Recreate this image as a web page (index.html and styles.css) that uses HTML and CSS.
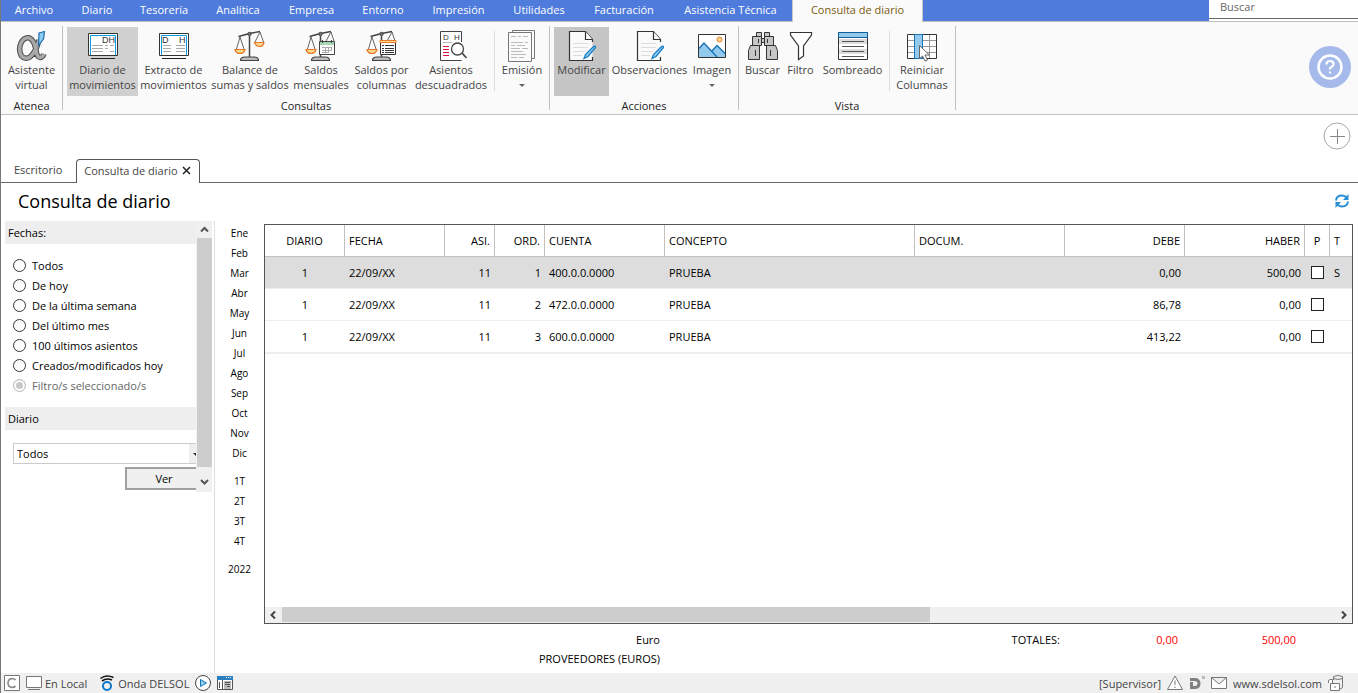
FILE: index.html
```html
<!DOCTYPE html>
<html lang="es">
<head>
<meta charset="utf-8">
<title>Consulta de diario</title>
<link rel="stylesheet" href="styles.css">
</head>
<body>
<svg class="defs" aria-hidden="true">
  <defs>
    <g id="scale-base" fill="none" stroke="#444">
      <path d="M4.500 6.500L15.500 3.500L26 1.500" stroke-width="1.300"/>
      <circle cx="15.500" cy="4" r="1.700" fill="#777"/>
      <path d="M15.500 6V27" stroke-width="1.500"/>
      <path d="M6 7L2.500 19M6 7L10 19" stroke="#666"/>
      <path d="M1 19.500H11Q10 23.500 6 23.500T1 19.500Z" fill="#fbd98c" stroke="#e8792b" stroke-width="1.200"/>
      <path d="M6.500 30.500Q6.500 27 11 27H20Q24.500 27 24.500 30.500Z" fill="#bbb" stroke-width="1.200"/>
    </g>
    <g id="page-pen" fill="none">
      <path d="M26.500 12V9.500L19.500 1.500H3.500V30.500H26.500V27" fill="#fafafa" stroke="#333" stroke-width="1.200"/>
      <path d="M19.500 1.500V9.500H26.500" fill="#fafafa" stroke="#333" stroke-width="1.200"/>
      <path d="M7 13.500H22M7 17.500H22M7 21.500H19M7 25.500H16" stroke="#ddd"/>
      <path d="M18 28.500L19.500 24.500L27 17Q29.500 15 29.500 17.500L22 26.500Z" fill="#8ecbf0" stroke="#1b7fc4" stroke-width="1.300"/>
    </g>
  </defs>
</svg>
<div class="app">
  <header class="menubar">
    <nav class="menu">
      <button>Archivo</button><button>Diario</button><button>Tesorería</button><button>Analítica</button><button>Empresa</button><button>Entorno</button><button>Impresión</button><button>Utilidades</button><button>Facturación</button><button>Asistencia Técnica</button><button class="current">Consulta de diario</button>
    </nav>
    <input class="search" type="text" placeholder="Buscar" aria-label="Buscar">
  </header>

  <section class="ribbon">
    <div class="group">
      <div class="tools atenea">
        <button class="tool"><svg viewBox="0 0 32 32"><path d="M23 10Q20 22 14 27Q9 30 5.500 26Q2 20 5 13Q8 7 13.500 8Q18 10 20 20Q21 28 24.500 27.500Q27 27 28 24" fill="none" stroke="#4b4b4b" stroke-width="5.500"/><path d="M23 10Q20 22 14 27Q9 30 5.500 26Q2 20 5 13Q8 7 13.500 8Q18 10 20 20Q21 28 24.500 27.500Q27 27 28 24" fill="none" stroke="#a9a9a9" stroke-width="3.500"/><path d="M23 3L28.500 1.500L27.500 9L22.500 15.500Z" fill="#8ecbf0" stroke="#1b6fae" stroke-width="1.200"/></svg><span>Asistente<br>virtual</span></button>
      </div>
      <div class="group-name">Atenea</div>
    </div>
    <div class="group">
      <div class="tools consultas">
        <button class="tool selected"><svg viewBox="0 0 32 32"><path d="M1.500 3.500H30.500V25.500H1.500Z" fill="#fff" stroke="#333"/><path d="M3.500 25V5.500H28.500V25" fill="none" stroke="#0b9be3"/><text x="15" y="13" class="glyph">DH</text><path d="M5 15.500H16M18 15.500H21M23 15.500H27M5 18.500H16M18 18.500H21M5 21.500H16M23 21.500H27" stroke="#aaa"/><path d="M4 28.500H28" stroke="#222"/></svg><span>Diario de<br>movimientos</span></button>
        <button class="tool"><svg viewBox="0 0 32 32"><path d="M1.500 3.500H30.500V25.500H1.500Z" fill="#fff" stroke="#333"/><path d="M3.500 25V5.500H28.500V25" fill="none" stroke="#0b9be3"/><text x="4" y="13" class="glyph">D</text><text x="21" y="13" class="glyph">H</text><path d="M5 15.500H13M18 15.500H27M5 18.500H13M18 18.500H27M5 21.500H13M18 21.500H27" stroke="#aaa"/><path d="M4 28.500H28" stroke="#222"/></svg><span>Extracto de<br>movimientos</span></button>
        <button class="tool"><svg viewBox="0 0 32 32"><use href="#scale-base"/><path d="M26 2L21 12M26 2L29.500 12" stroke="#666"/><path d="M20.500 12.500H30Q29 16.500 25.500 16.500T20.500 12.500Z" fill="#fbd98c" stroke="#e8792b" stroke-width="1.200"/></svg><span>Balance de<br>sumas y saldos</span></button>
        <button class="tool"><svg viewBox="0 0 32 32"><use href="#scale-base"/><path d="M26 2L21 11M26 2L29 11" stroke="#666"/><path d="M14.500 11.500H29.500V24.500H14.500Z" fill="#fff" stroke="#444"/><path d="M15 12H29V15H15Z" fill="#a7d8b4"/><path d="M17.500 10V13M26.500 10V13" stroke="#444"/><path d="M17 17.500H27M17 20.500H27M17 22.500H24M20.500 17V23M23.500 17V23M26.500 17V21" stroke="#aaa"/></svg><span>Saldos<br>mensuales</span></button>
        <button class="tool"><svg viewBox="0 0 32 32"><use href="#scale-base"/><path d="M26 2L21 11M26 2L29 11" stroke="#666"/><path d="M14.500 11.500H29.500V24.500H14.500Z" fill="#fff" stroke="#333"/><path d="M14 10.500H30V12.500H14Z" fill="#fbd98c" stroke="#e8792b"/><path d="M16 15.500H18M19 15.500H28M16 18.500H18M19 18.500H28M16 20.500H18M19 20.500H28M16 22.500H18M19 22.500H28" stroke="#333"/></svg><span>Saldos por<br>columnas</span></button>
        <button class="tool"><svg viewBox="0 0 32 32"><path d="M26.500 12V1.500H5.500V30.500H26.500" fill="#fff" stroke="#444"/><text x="8" y="10" class="glyph small">D</text><text x="19" y="10" class="glyph small">H</text><path d="M8 12.500H17" stroke="#bbb"/><path d="M8 16.500H14M8 19.500H14M8 22.500H14M8 25.500H14" stroke="#d9133b"/><circle cx="22.500" cy="19" r="6" fill="#fff" stroke="#444" stroke-width="1.300"/><path d="M27 23L31.500 28" stroke="#444" stroke-width="1.600"/></svg><span>Asientos<br>descuadrados</span></button>
        <i class="divider"></i>
        <button class="tool"><svg viewBox="0 0 32 32"><g fill="#fafafa" stroke="#777"><path d="M6.500 .5H28.500V28.500H6.500Z"/><path d="M2.500 2.500H25.500V31.500H2.500Z"/></g><path d="M5 6.500H10M12 6.500H15M17 6.500H22M5 12.500H17M19 12.500H22M5 15.500H9M11 15.500H19M5 18.500H14M16 18.500H22M5 21.500H17M5 24.500H20M5 27.500H11M13 27.500H18" stroke="#bbb"/></svg><span>Emisión</span><i class="caret"></i></button>
      </div>
      <div class="group-name">Consultas</div>
    </div>
    <div class="group">
      <div class="tools acciones">
        <button class="tool pressed"><svg viewBox="0 0 32 32"><use href="#page-pen"/></svg><span>Modificar</span></button>
        <button class="tool"><svg viewBox="0 0 32 32"><use href="#page-pen"/></svg><span>Observaciones</span></button>
        <button class="tool"><svg viewBox="0 0 32 32"><path d="M2.500 4.500H29.500V28H2.500Z" fill="#fff"/><path d="M3 19L8 13L16 21L21 15L29 23V28H3Z" fill="#93c9ed"/><path d="M3 18.500L8 13L21 27M16 21L21 15.500L29 23.500" fill="none" stroke="#1874b5" stroke-width="1.400"/><circle cx="23.500" cy="9.500" r="2.500" fill="#fbd98c" stroke="#e8792b"/><path d="M2.500 4.500H29.500V27.500H2.500Z" fill="none" stroke="#333"/></svg><span>Imagen</span><i class="caret"></i></button>
      </div>
      <div class="group-name">Acciones</div>
    </div>
    <div class="group">
      <div class="tools vista">
        <button class="tool"><svg viewBox="0 0 32 32"><g fill="#c6c6c6" stroke="#333"><path d="M9.500 2.500H14.500V6.500H9.500ZM17.500 2.500H22.500V6.500H17.500Z"/><path d="M14.500 8.500H17.500V12.500H14.500Z"/><path d="M5.500 6.500H14.500V15.500H5.500ZM17.500 6.500H26.500V15.500H17.500Z"/><path d="M3.500 15.500H12.500V29.500H1.500V20.500ZM19.500 15.500H28.500L30.500 20.500V29.500H19.500Z"/><path d="M8.500 20V26M23.500 20V26M11.500 9V13M20.500 9V13"/></g></svg><span>Buscar</span></button>
        <button class="tool"><svg viewBox="0 0 32 32"><path d="M5.500 2.500H26.500V5L18.500 16V26L13.500 29.500V16L5.500 5Z" fill="#fff" stroke="#333" stroke-width="1.200"/></svg><span>Filtro</span></button>
        <button class="tool"><svg viewBox="0 0 32 32"><path d="M1.500 2.500H30.500V29.500H1.500Z" fill="#fff" stroke="#333"/><path d="M2 9H30V14H2ZM2 19H30V24H2Z" fill="#ddd"/><path d="M1.500 2.500H30.500V7.500H1.500Z" fill="#93c9ed" stroke="#1060a0"/><path d="M5 11.500H27M5 16.500H27M5 21.500H27M5 26.500H27" stroke="#555"/></svg><span>Sombreado</span></button>
        <i class="divider"></i>
        <button class="tool"><svg viewBox="0 0 32 32"><path d="M1.500 4.500H30.500V28.500H1.500Z" fill="#fff" stroke="#333"/><path d="M2 10.500H30M2 16.500H30M2 22.500H30M23.500 5V28" stroke="#999"/><path d="M8.500 4.500H16.500V28.500H8.500Z" fill="#93c9ed" stroke="#1874b5"/><path d="M13.500 15.500V28.500L16.500 26L19 31L21.500 30L19 25H23.500Z" fill="#fff" stroke="#666"/></svg><span>Reiniciar<br>Columnas</span></button>
      </div>
      <div class="group-name">Vista</div>
    </div>
    <button class="help" aria-label="Ayuda"><svg viewBox="0 0 42 42"><circle cx="21" cy="21" r="21" fill="#a5baea"/><circle cx="21" cy="21" r="11.500" fill="none" stroke="#fff" stroke-width="2.500"/><path d="M17.500 18.500Q17.500 15 21 15T24.500 18Q24.500 20 22.500 21T21 23.500M21 25.500V27.500" fill="none" stroke="#fff" stroke-width="2.200"/></svg></button>
  </section>

  <nav class="docs">
    <button class="doc">Escritorio</button>
    <div class="doc active"><span>Consulta de diario</span><button class="close" aria-label="Cerrar"><svg viewBox="0 0 9 9"><path d="M1 1L8 8M8 1L1 8" stroke="#222" stroke-width="1.500"/></svg></button></div>
    <button class="add" aria-label="Añadir"><svg viewBox="0 0 28 28"><circle cx="14" cy="14" r="13" fill="#fff" stroke="#aaa"/><path d="M14.500 7V22M7 14.500H22" stroke="#888"/></svg></button>
  </nav>

  <div class="heading">
    <h1>Consulta de diario</h1>
    <button class="refresh" aria-label="Actualizar"><svg viewBox="0 0 16 16"><path d="M2 7.500Q2.500 2.500 8 2.500Q11 2.500 13 5M14 8.500Q13.500 13.500 8 13.500Q5 13.500 3 11" fill="none" stroke="#2a8fd6" stroke-width="2"/><path d="M14.500 1V7H9ZM1.500 15V9H7Z" fill="#2a8fd6"/></svg></button>
  </div>

  <main class="work">
    <aside class="side">
      <div class="filters">
        <form class="form">
          <h2>Fechas:</h2>
          <div class="radios">
            <label><input type="radio" name="f">Todos</label>
            <label><input type="radio" name="f">De hoy</label>
            <label><input type="radio" name="f">De la última semana</label>
            <label><input type="radio" name="f">Del último mes</label>
            <label><input type="radio" name="f">100 últimos asientos</label>
            <label><input type="radio" name="f">Creados/modificados hoy</label>
            <label class="off"><input type="radio" name="f" checked disabled>Filtro/s seleccionado/s</label>
          </div>
          <h2><label for="diario">Diario</label></h2>
          <div class="combo"><select id="diario"><option>Todos</option></select><i></i></div>
          <button type="button" class="view">Ver</button>
        </form>
        <div class="vscroll">
          <svg viewBox="0 0 15 16"><path d="M4 10L7.500 6.500L11 10" fill="none" stroke="#555" stroke-width="2"/></svg>
          <i class="thumb"></i>
          <svg class="end" viewBox="0 0 15 16"><path d="M4 8.500L7.500 12L11 8.500" fill="none" stroke="#555" stroke-width="2"/></svg>
        </div>
      </div>
    </aside>

    <nav class="months">
      <button>Ene</button><button>Feb</button><button>Mar</button><button>Abr</button><button>May</button><button>Jun</button><button>Jul</button><button>Ago</button><button>Sep</button><button>Oct</button><button>Nov</button><button>Dic</button>
      <button class="apart">1T</button><button>2T</button><button>3T</button><button>4T</button>
      <button class="apart">2022</button>
    </nav>

    <section class="content">
      <div class="grid">
        <table>
          <colgroup><col class="w80"><col class="w100"><col class="w50"><col class="w50"><col class="w120"><col class="w250"><col class="w150"><col class="w120"><col class="w120"><col class="w25"><col></colgroup>
          <thead><tr><th class="c">DIARIO</th><th>FECHA</th><th class="r">ASI.</th><th class="r">ORD.</th><th>CUENTA</th><th>CONCEPTO</th><th>DOCUM.</th><th class="r">DEBE</th><th class="r">HABER</th><th class="c">P</th><th>T</th></tr></thead>
          <tbody>
            <tr class="sel"><td class="c">1</td><td>22/09/XX</td><td class="r">11</td><td class="r">1</td><td>400.0.0.0000</td><td>PRUEBA</td><td></td><td class="r">0,00</td><td class="r">500,00</td><td class="c"><input type="checkbox" aria-label="P"></td><td>S</td></tr>
            <tr><td class="c">1</td><td>22/09/XX</td><td class="r">11</td><td class="r">2</td><td>472.0.0.0000</td><td>PRUEBA</td><td></td><td class="r">86,78</td><td class="r">0,00</td><td class="c"><input type="checkbox" aria-label="P"></td><td></td></tr>
            <tr><td class="c">1</td><td>22/09/XX</td><td class="r">11</td><td class="r">3</td><td>600.0.0.0000</td><td>PRUEBA</td><td></td><td class="r">413,22</td><td class="r">0,00</td><td class="c"><input type="checkbox" aria-label="P"></td><td></td></tr>
          </tbody>
        </table>
        <div class="hscroll">
          <svg viewBox="0 0 17 16"><path d="M10 4.500L6.500 8L10 11.500" fill="none" stroke="#444" stroke-width="2"/></svg>
          <div class="track"><i class="thumb"></i></div>
          <svg viewBox="0 0 17 16"><path d="M7 4.500L10.500 8L7 11.500" fill="none" stroke="#444" stroke-width="2"/></svg>
        </div>
      </div>
      <div class="totals">
        <div class="account">Euro<br>PROVEEDORES (EUROS)</div>
        <div class="label">TOTALES:</div>
        <div class="red">0,00</div>
        <div class="red">500,00</div>
      </div>
    </section>
  </main>

  <footer class="status">
    <svg class="i16" viewBox="0 0 16 16"><path d="M.5 .5H15.500V15.500H.5Z" fill="#fff" stroke="#777"/><path d="M11.500 5Q10.500 3.500 8 3.500Q4 4 4 8T8 12.500Q10.500 12.500 11.500 11" fill="none" stroke="#888" stroke-width="1.600"/></svg>
    <svg class="i16 screen" viewBox="0 0 16 16"><path d="M.5 1.500H15.500V12.500H.5Z" fill="#fff" stroke="#777"/><path d="M2 14.500H14" stroke="#777"/></svg>
    <span class="local">En Local</span>
    <svg class="i16" viewBox="0 0 16 16"><path d="M1.500 3.500Q7 -1 14.500 2.500M3 6Q7.500 2.500 13 5" fill="none" stroke="#111" stroke-width="1.600"/><circle cx="8" cy="11" r="4" fill="none" stroke="#0878d0" stroke-width="2"/></svg>
    <span class="onda">Onda DELSOL</span>
    <svg class="i16" viewBox="0 0 16 16"><circle cx="8" cy="8" r="7.500" fill="#fff" stroke="#444"/><path d="M5.500 4.500L11.500 8L5.500 11.500Z" fill="#8ecbf0" stroke="#1874b5"/></svg>
    <svg class="i16" viewBox="0 0 16 16"><path d="M.5 1.500H15.500V14.500H.5Z" fill="#fff" stroke="#555"/><path d="M0 1H16V5H0Z" fill="#2a7fc0"/><path d="M9 2.500H10M11 2.500H12M13 2.500H14" stroke="#fff"/><path d="M5.500 5V14M2.500 7V13" stroke="#555"/><path d="M7 6H14V14H7Z" fill="#bbb"/><path d="M8 7.500H13M8 9.500H13M10 11.500H13" stroke="#555"/></svg>
    <span class="user">[Supervisor]</span>
    <svg class="i16" viewBox="0 0 16 16"><path d="M8 1L15.500 14.500H.5Z" fill="#fff" stroke="#777"/><path d="M8 5.500V10M8 11.500V13" stroke="#777"/></svg>
    <svg class="i16" viewBox="0 0 16 16"><path d="M1 4.500H5.500Q10 4.500 10 8.500T5.500 12.500H2.500V7" fill="none" stroke="#808080" stroke-width="3"/><path d="M13 1H16V4H13Z" fill="#bbb"/></svg>
    <svg class="i16" viewBox="0 0 16 16"><path d="M.5 2.500H15.500V13.500H.5ZM.5 2.500L8 9L15.500 2.500" fill="#fff" stroke="#777"/></svg>
    <a href="#">www.sdelsol.com</a>
    <svg class="i16" viewBox="0 0 16 16"><path d="M5.500 5V1.500Q10 -.5 14.500 1.500V12.500Q13 14 11.500 14M5.500 3.500Q10 5.500 14.500 3.500" fill="none" stroke="#777"/><path d="M2.500 15.500V8.500H11.500V15.500ZM.5 8V5.500Q1.500 4 4.500 4.500V8M7 11V13" fill="#fff" stroke="#777"/></svg>
  </footer>
</div>
</body>
</html>
```
FILE: styles.css
```css
* { box-sizing: border-box; }
html, body { height: 100%; }
body { margin: 0; font: 11px/15px "Open Sans", "Noto Sans", sans-serif; color: #000; background: #fff; }
button, input, select { font: inherit; color: inherit; }
button { margin: 0; padding: 0; border: 0; background: none; }
svg { display: block; }
.defs { position: absolute; width: 0; height: 0; }
.app { display: flex; flex-direction: column; min-height: 100%; border-left: 1px solid #777; }

.menubar { display: flex; height: 22px; background: #4e7bdc; border-bottom: 1px solid #c0c0c0; }
.menu { flex: 1; display: grid; grid-template-columns: 66px 60px 74px 74px 73px 70px 81px 80px 90px 123px 131px; }
.menu button { color: #fff; height: 21px; padding-bottom: 2px; white-space: nowrap; }
.menu .current { height: 22px; padding-bottom: 4px; background: #fafafa; color: #7a5a10; border: 1px solid #c8c8c8; border-width: 0 1px; }
.search { width: 149px; height: 19px; padding: 0 11px 5px; border: 0; border-bottom: 1px solid #666; background: #fff; box-shadow: 0 2px #fff; outline: 0; }
.search::placeholder { color: #666; opacity: 1; }

.ribbon { display: flex; height: 93px; background: #fafafa; border-bottom: 1px solid #c0c0c0; padding: 4px 0; }
.group { border-right: 1px solid #c0c0c0; display: flex; flex-direction: column; }
.tools { flex: none; display: grid; height: 70px; padding: 1px 4px 0; }
.atenea { grid-template-columns: 61px; padding: 1px 0 0; }
.consultas { grid-template-columns: 71px 71px 82px 60px 61px 78px 9px 46px; }
.acciones { grid-template-columns: 55px 81px 44px; }
.vista { grid-template-columns: 39px 37px 67px 7px 58px; }
.tool { display: flex; flex-direction: column; align-items: center; justify-content: flex-start; padding-top: 3px; color: #444; white-space: nowrap; }
.tool svg { width: 32px; height: 32px; flex: none; }
.tool.selected { background: #d0d0d0; }
.tool.pressed { background: #c5c5c5; }
.glyph { font: 9px "Liberation Sans", sans-serif; fill: #333; }
.small { font-size: 8px; }
.divider { justify-self: center; width: 1px; height: 60px; margin-top: 4px; background: #ddd; }
.caret { margin-top: 7px; border: 3px solid transparent; border-top-color: #666; border-bottom: 0; }
.group-name { text-align: center; line-height: 19px; color: #222; }
.help { margin: 20px 7px 0 auto; width: 42px; height: 42px; }

.docs { display: flex; align-items: flex-end; height: 68px; border-bottom: 1px solid #666; color: #444; }
.doc { height: 24px; padding: 0 13px 2px; }
.doc.active { display: flex; align-items: center; gap: 4px; padding: 0 8px 2px 7px; margin: 0 0 -1px 1px; background: #fff; border: 1px solid #555; border-bottom: 0; border-radius: 4px 4px 0 0; white-space: nowrap; }
.close { width: 9px; height: 9px; }
.add { align-self: flex-start; margin: 7px 7px 0 auto; width: 28px; height: 28px; }

.heading { display: flex; align-items: center; justify-content: space-between; height: 38px; padding: 0 8px 3px 17px; }
h1 { margin: 0; font-size: 18px; line-height: 24px; font-weight: 400; }
.refresh { width: 16px; height: 16px; }

.work { flex: 1; display: flex; }
.side { width: 214px; border-right: 1px solid #ddd; padding-left: 4px; }
.filters { display: flex; height: 271px; }
.form { width: 191px; overflow: hidden; }
h2 { margin: 0; padding-left: 3px; font-size: 11px; line-height: 23px; font-weight: 400; background: #eee; }
.radios { padding: 11px 0 12px 8px; }
.radios label { display: flex; align-items: center; gap: 6px; height: 20px; white-space: nowrap; }
.radios input { appearance: none; width: 13px; height: 13px; margin: 0; border: 1px solid #333; border-radius: 50%; }
.off { color: #666; }
.radios .off input { border-color: #bbb; background: #c8c8c8; box-shadow: inset 0 0 0 2px #fff; }
.combo { position: relative; display: flex; width: 200px; height: 21px; margin: 13px 0 3px 8px; border: 1px solid #ccc; }
.combo select { flex: 1; appearance: none; border: 0; background: linear-gradient(90deg, #fff 175px, #eee 175px); padding: 0 3px; border-radius: 0; }
.combo i { position: absolute; right: 13px; top: 9px; border: 3px solid transparent; border-top-color: #222; border-bottom: 0; }
.view { display: block; width: 78px; height: 23px; margin-left: 120px; background: #f0f0f0; border: 2px solid #a0a0a0; }
.vscroll { width: 16px; display: flex; flex-direction: column; align-items: center; background: #f0f0f0; }
.vscroll svg { width: 15px; height: 17px; }
.vscroll .thumb { flex: 1; width: 15px; background: #cdcdcd; }
.vscroll .end { height: 25px; }

.months { width: 49px; padding-top: 2px; display: flex; flex-direction: column; font-size: 10px; }
.months button { height: 20px; }
.months .apart { margin-top: 8px; }

.content { flex: 1; display: flex; flex-direction: column; padding: 3px 5px 0 0; }
.grid { flex: 1; display: flex; flex-direction: column; justify-content: space-between; border: 1px solid #555; }
table { width: 100%; table-layout: fixed; border-collapse: separate; border-spacing: 0; border-bottom: 1px solid #eee; }
.w80 { width: 80px; } .w100 { width: 100px; } .w50 { width: 50px; } .w120 { width: 120px; } .w250 { width: 250px; } .w150 { width: 150px; } .w25 { width: 25px; }
th, td { height: 32px; padding: 0 4px; font-weight: 400; text-align: left; border-bottom: 1px solid #eee; white-space: nowrap; }
th { border-right: 1px solid #c0c0c0; border-bottom-color: #c0c0c0; }
td { padding-right: 4px; }
th:last-child { border-right: 0; }
th.c, td.c { padding: 0; text-align: center; }
th.r, td.r { text-align: right; }
.sel td { background: #ddd; }
td input { appearance: none; display: block; width: 13px; height: 13px; margin: 0 auto; border: 1px solid #222; background: #fff; }
.hscroll { display: flex; height: 16px; background: #f0f0f0; }
.hscroll svg { width: 17px; height: 16px; }
.track { flex: 1; }
.track .thumb { display: block; width: 61.5%; height: 15px; background: #cdcdcd; }
.totals { display: flex; height: 49px; padding-top: 6px; line-height: 19px; }
.account { width: 396px; text-align: right; }
.label { width: 400px; text-align: right; }
.red { width: 118px; text-align: right; color: #f00; }

.status { display: flex; align-items: center; height: 20px; padding: 0 14px 0 3px; gap: 6px; background: #f0f0f0; color: #444; }
.i16 { width: 16px; height: 16px; flex: none; }
.local { margin: 0 6px 0 -3px; }
.onda { margin-left: -3px; }
.user { margin-left: auto; }
.status a { color: inherit; text-decoration: none; }
```
